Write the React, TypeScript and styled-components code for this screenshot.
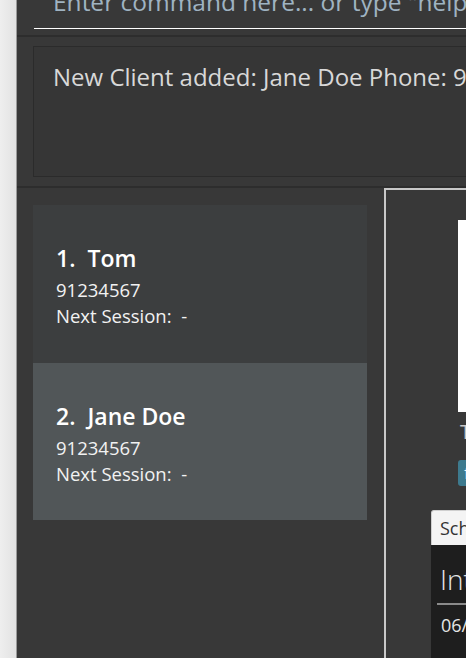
import React from "react";
import styled, { createGlobalStyle } from "styled-components";

const GlobalStyle = createGlobalStyle`
    html, body {
        margin: 0;
        padding: 0;
        width: 466px;
        height: 658px;
        overflow: hidden;
        background: #383838;
    }
    #root {
        height: 658px;
    }
    * {
        box-sizing: border-box;
    }
`;

const FONT = `"Open Sans", "Noto Sans", sans-serif`;

const Window = styled.div`
    display: flex;
    width: 760px;
    height: 658px;
    font-family: ${FONT};
`;

const SideStrip = styled.div`
    width: 17px;
    flex: none;
    background: linear-gradient(to right, #eeeeee, #e2e2e2);
    border-right: 1px solid #9a9a9a;
`;

const Main = styled.div`
    flex: 1;
    display: flex;
    flex-direction: column;
    background: #383838;
`;

const CommandBar = styled.div`
    height: 37px;
    padding: 0 0 0 17px;
    border-bottom: 2px solid #2d2d2d;
    display: flex;
    align-items: flex-start;
`;

const CommandInput = styled.div`
    width: 100%;
    height: 42px;
    margin-top: -13px;
    border-bottom: 1px solid #ffffff;
    padding-left: 19px;
    color: #9fb3c2;
    font-size: 24.5px;
    line-height: 30px;
    white-space: nowrap;
    overflow: hidden;
`;

const ResultArea = styled.div`
    height: 151px;
    padding: 9px 0 9px 16px;
    border-bottom: 2px solid #2d2d2d;
`;

const ResultBox = styled.div`
    height: 100%;
    border: 1px solid #2b2b2b;
    background: #363636;
    padding: 14px 0 0 19px;
    color: #d8d8d8;
    font-size: 24px;
    line-height: 32px;
    white-space: nowrap;
    overflow: hidden;
`;

const Content = styled.div`
    flex: 1;
    display: flex;
    min-height: 0;
`;

const ListPanel = styled.div`
    width: 367px;
    flex: none;
    padding: 17px 17px 0 16px;
    background: #383838;
`;

const Card = styled.div<{ $selected?: boolean }>`
    height: 157.5px;
    background: ${(p) => (p.$selected ? "#515658" : "#3c3e3f")};
    padding: 39px 0 0 23px;
    display: flex;
    flex-direction: column;
    color: #ffffff;
`;

const CardTitle = styled.div`
    font-size: 23px;
    font-weight: 600;
    line-height: 28px;
    margin-bottom: 5px;
    white-space: pre;
`;

const CardLine = styled.div`
    font-size: 18.5px;
    line-height: 26px;
    color: #f2f2f2;
    white-space: pre;
`;

const DetailPanel = styled.div`
    flex: 1;
    border-left: 2px solid #c8c8c8;
    border-top: 2px solid #c8c8c8;
    background: #383838;
    padding: 30px 0 0 45px;
    display: flex;
    flex-direction: column;
`;

const Photo = styled.div`
    width: 200px;
    height: 192px;
    background: #ffffff;
    margin-left: 27px;
`;

const ProfileText = styled.div`
    margin: 7px 0 0 29px;
    color: #c8c8c8;
    font-size: 20px;
    line-height: 26px;
`;

const Tag = styled.span`
    align-self: flex-start;
    margin: 15px 0 0 27px;
    background: #3d7a8e;
    color: #ffffff;
    border-radius: 3px;
    padding: 0 6px;
    font-size: 17px;
    line-height: 26px;
`;

const TabRow = styled.div`
    margin-top: 24px;
    display: flex;
`;

const Tab = styled.div`
    background: #f4f4f4;
    border: 1px solid #cfcfcf;
    border-bottom: none;
    border-radius: 3px 0 0 0;
    padding: 0 8px;
    height: 35px;
    color: #333333;
    font-size: 18px;
    line-height: 35px;
`;

const TabBody = styled.div`
    flex: 1;
    background: #1e1e1e;
    padding: 17px 0 0 6px;
    color: #e6e6e6;
`;

const SessionHeading = styled.div`
    font-size: 28px;
    font-weight: 300;
    line-height: 34px;
    padding: 0 0 7px 3px;
    border-bottom: 2px solid #8a8a8a;
    width: 260px;
`;

const SessionRow = styled.div`
    padding: 8px 0 0 4px;
    font-size: 18px;
    line-height: 24px;
`;

const clients = [
    { name: "Tom", phone: "91234567" },
    { name: "Jane Doe", phone: "91234567" },
];

export default function App() {
    return (
        <>
            <GlobalStyle />
            <Window>
                <SideStrip />
                <Main>
                    <CommandBar>
                        <CommandInput>
                            Enter command here... or type "help" for a list of commands
                        </CommandInput>
                    </CommandBar>
                    <ResultArea>
                        <ResultBox>
                            New Client added: Jane Doe Phone: 91234567
                        </ResultBox>
                    </ResultArea>
                    <Content>
                        <ListPanel>
                            {clients.map((c, i) => (
                                <Card key={c.name} $selected={i === 1}>
                                    <CardTitle>{`${i + 1}.  ${c.name}`}</CardTitle>
                                    <CardLine>{c.phone}</CardLine>
                                    <CardLine>{"Next Session:  -"}</CardLine>
                                </Card>
                            ))}
                        </ListPanel>
                        <DetailPanel>
                            <Photo />
                            <ProfileText>Tom</ProfileText>
                            <Tag>friends</Tag>
                            <TabRow>
                                <Tab>Schedule</Tab>
                            </TabRow>
                            <TabBody>
                                <SessionHeading>Interactions</SessionHeading>
                                <SessionRow>06/04/2024</SessionRow>
                            </TabBody>
                        </DetailPanel>
                    </Content>
                </Main>
            </Window>
        </>
    );
}
